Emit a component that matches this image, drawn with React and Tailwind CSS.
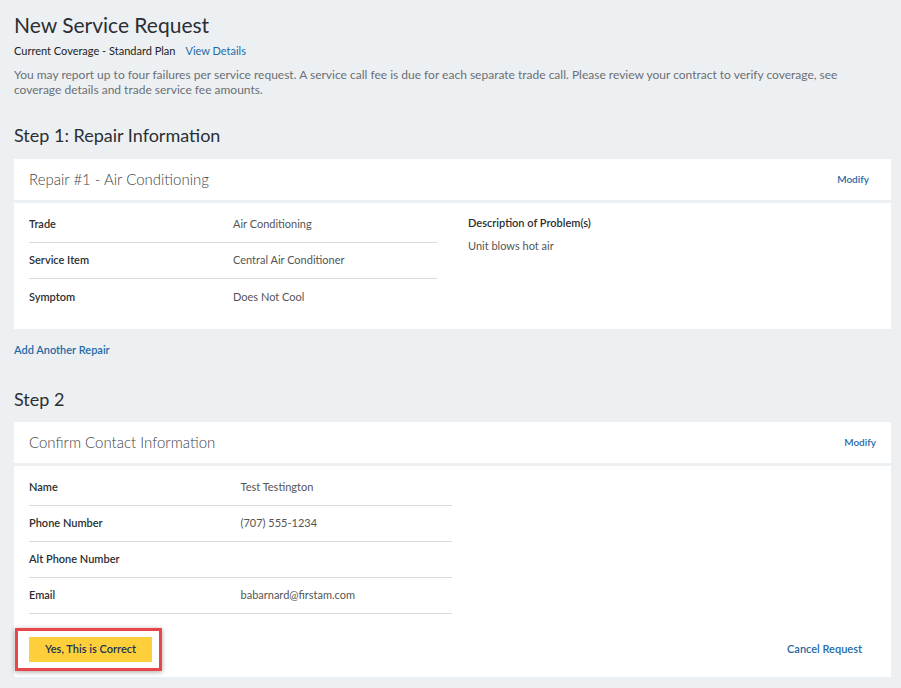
export default function App() {
  const link = "text-[#1f6aa5]";
  return (
    <div className="min-h-[688px] w-[901px] bg-[#edf0f3] pl-[14px] pr-[10px] pt-[11px] pb-[11px] text-[#333]" style={{ fontFamily: "Lato, 'Open Sans', sans-serif" }}>
      <h1 className="text-[21px] leading-[28px] text-[#2b2f33]">New Service Request</h1>
      <div className="mt-[4px] flex gap-[10px] text-[11px] leading-[16px]">
        <span className="text-[#222]">Current Coverage - Standard Plan</span>
        <span className={link}>View Details</span>
      </div>
      <p className="mt-[8px] pr-[24px] text-[12px] leading-[15px] text-[#6b6f74]">
        You may report up to four failures per service request. A service call fee is due for each separate trade call. Please review your contract to verify coverage, see coverage details and trade service fee amounts.
      </p>

      <h2 className="mt-[26px] text-[18px] leading-[24px] text-[#2b2f33]">Step 1: Repair Information</h2>
      <div className="mt-[12px] flex h-[41px] items-center justify-between bg-white pr-[22px] pl-[15px]">
        <span className="text-[15px] font-light text-[#444]">Repair #1 - Air Conditioning</span>
        <span className={`text-[10px] font-semibold ${link}`}>Modify</span>
      </div>
      <div className="mt-[3px] flex bg-white px-[15px] pt-[4px] pb-[14px]">
        <div className="w-[408px]">
          {[
            ["Trade", "Air Conditioning"],
            ["Service Item", "Central Air Conditioner"],
            ["Symptom", "Does Not Cool"],
          ].map(([k, v], i) => (
            <div key={k} className={`grid h-[36px] grid-cols-2 items-center text-[11px] ${i < 2 ? "border-b border-[#d9dbde]" : ""}`}>
              <span className="font-semibold text-[#2b2f33]">{k}</span>
              <span className="text-[#555]">{v}</span>
            </div>
          ))}
        </div>
        <div className="ml-[31px] pt-[8px] text-[11px]">
          <div className="font-semibold leading-[16px] text-[#2b2f33]">Description of Problem(s)</div>
          <div className="mt-[7px] leading-[16px] text-[#555]">Unit blows hot air</div>
        </div>
      </div>

      <div className={`mt-[13px] text-[11px] font-semibold leading-[16px] ${link}`}>Add Another Repair</div>

      <h2 className="mt-[29px] text-[18px] leading-[24px] text-[#2b2f33]">Step 2</h2>
      <div className="mt-[11px] flex h-[41px] items-center justify-between bg-white px-[15px]">
        <span className="text-[15px] font-light text-[#444]">Confirm Contact Information</span>
        <span className={`text-[10px] font-semibold ${link}`}>Modify</span>
      </div>
      <div className="mt-[3px] bg-white px-[15px] pt-[4px] pb-[15px]">
        <div className="w-[423px]">
          {[
            ["Name", "Test Testington"],
            ["Phone Number", "(707) 555-1234"],
            ["Alt Phone Number", ""],
            ["Email", "babarnard@firstam.com"],
          ].map(([k, v]) => (
            <div key={k} className="grid h-[36px] grid-cols-2 items-center border-b border-[#d9dbde] text-[11px]">
              <span className="font-semibold text-[#2b2f33]">{k}</span>
              <span className="text-[#555]">{v}</span>
            </div>
          ))}
        </div>
        <div className="mt-[23px] flex items-center justify-between pr-[14px]">
          <div className="relative">
            <div className="pointer-events-none absolute -top-[9px] -right-[10px] -bottom-[9px] -left-[14px] border-[3px] border-[#e8474a] shadow-[0_1px_5px_rgba(0,0,0,0.35)]"></div>
            <button className="flex h-[25px] w-[123px] items-center justify-center bg-[#fdd03b] text-[11px] font-semibold text-[#1d2f55]">
              Yes, This is Correct
            </button>
          </div>
          <span className={`text-[11px] font-semibold ${link}`}>Cancel Request</span>
        </div>
      </div>
    </div>
  );
}
